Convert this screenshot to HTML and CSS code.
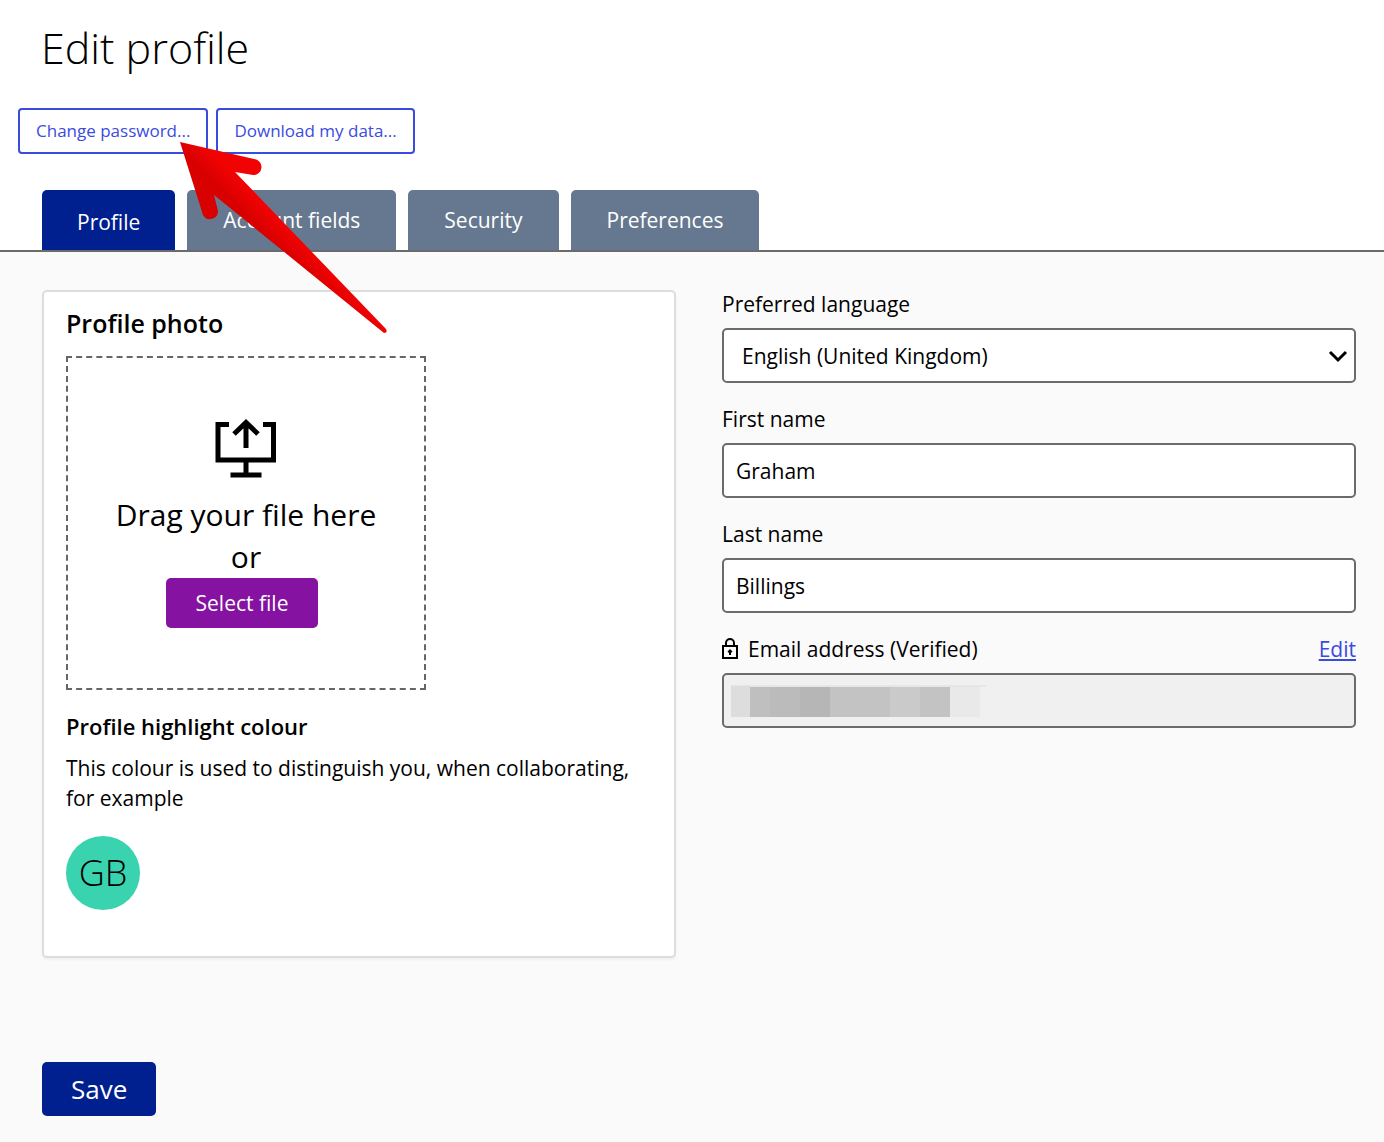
FILE: index.html
```html
<!DOCTYPE html>
<html lang="en">
<head>
    <meta charset="UTF-8">
    <meta name="viewport" content="width=device-width, initial-scale=1.0">
    <title>Edit profile</title>
    <link rel="stylesheet" href="styles.css">
</head>
<body>
    <header class="header">
        <h1>Edit profile</h1>
        <div class="actions">
            <button type="button">Change password...</button>
            <button type="button">Download my data...</button>
        </div>
        <nav class="tabs">
            <a href="#" class="active">Profile</a>
            <a href="#">Account fields</a>
            <a href="#">Security</a>
            <a href="#">Preferences</a>
        </nav>
    </header>

    <form class="main">
        <div class="columns">
            <section class="card">
                <h2>Profile photo</h2>
                <div class="dropzone">
                    <svg class="upload" viewBox="0 0 64 60" width="64" height="60" fill="none" stroke="#000" stroke-width="5">
                        <path d="M15 5.500H4V41H59.500V5.500H49"/>
                        <path d="M32 41V56M16.500 56H47.500"/>
                        <path d="M32 29V4M20 15L32 3.500L44 15"/>
                    </svg>
                    <p>Drag your file here</p>
                    <p>or</p>
                    <button type="button" class="select-file">Select file</button>
                </div>
                <h3>Profile highlight colour</h3>
                <p class="hint">This colour is used to distinguish you, when collaborating, for example</p>
                <div class="avatar">GB</div>
            </section>

            <section class="fields">
                <div class="field">
                    <label for="language">Preferred language</label>
                    <div class="control">
                        <select id="language">
                            <option>English (United Kingdom)</option>
                        </select>
                        <svg class="chevron" viewBox="0 0 20 14" width="20" height="14" fill="none" stroke="#000" stroke-width="3">
                            <path d="M2 2L10 10L18 2"/>
                        </svg>
                    </div>
                </div>
                <div class="field">
                    <label for="first">First name</label>
                    <input id="first" type="text" value="Graham">
                </div>
                <div class="field">
                    <label for="last">Last name</label>
                    <input id="last" type="text" value="Billings">
                </div>
                <div class="field">
                    <div class="label-row">
                        <svg class="lock" viewBox="0 0 18 22" width="18" height="22" fill="none" stroke="#000" stroke-width="2">
                            <path d="M1 8H15V20H1ZM4 8V5A4 4 0 0 1 12 5V8"/>
                            <path d="M8 11L10.500 13.500L9 15V17H7V15L5.500 13.500Z" fill="#000" stroke="none"/>
                        </svg>
                        <label for="email">Email address (Verified)</label>
                        <a href="#">Edit</a>
                    </div>
                    <div class="control">
                        <input id="email" type="email" disabled>
                        <!-- hidden address -->
                        <svg class="mask" viewBox="0 0 255 32" width="255" height="32" shape-rendering="crispEdges">
                            <rect width="255" height="2" fill="#e6e6e6"/>
                            <rect y="1" width="19" height="31" fill="#ddd"/>
                            <rect x="19" y="2" width="20" height="30" fill="#bfbfbf"/>
                            <rect x="39" y="2" width="30" height="30" fill="#bbb"/>
                            <rect x="69" y="2" width="30" height="30" fill="#b6b6b6"/>
                            <rect x="99" y="2" width="60" height="30" fill="#c3c3c3"/>
                            <rect x="159" y="2" width="30" height="30" fill="#cacaca"/>
                            <rect x="189" y="2" width="30" height="30" fill="#c3c3c3"/>
                            <rect x="219" y="2" width="30" height="30" fill="#e9e9e9"/>
                        </svg>
                    </div>
                </div>
            </section>
        </div>
        <button type="submit" class="save">Save</button>
    </form>

    <!-- pointer to the change password button -->
    <svg class="arrow" viewBox="0 0 208 192" width="208" height="192">
        <defs>
            <linearGradient id="red" gradientUnits="userSpaceOnUse" x1="96" y1="102" x2="110" y2="88">
                <stop offset="0" stop-color="#d90000"/>
                <stop offset="1" stop-color="#f20303"/>
            </linearGradient>
        </defs>
        <path d="M0 0L74 17A8 8 0 0 1 73 33L55 30L206 187Q208 191 204 191L34 53L38 69A8 8 0 0 1 23 73Z" fill="url(#red)"/>
    </svg>
</body>
</html>
```
FILE: styles.css
```css
*{
    box-sizing: border-box;
}
body,h1,h2,h3,p{
    margin: 0;
}
body{
    min-height: 100vh;
    display: flex;
    flex-direction: column;
    position: relative;
    background: #fafafa;
    color: #000;
    font-family: "Open Sans", sans-serif;
    font-size: 21px;
    line-height: 28px;
}
button,input,select{
    font: inherit;
    color: inherit;
}
button{
    cursor: pointer;
}

/* header */
.header{
    background: #fff;
    border-bottom: 2px solid #6b6b6b;
    padding-top: 16px;
}
h1{
    margin-left: 41px;
    font-size: 43px;
    font-weight: 300;
    line-height: 64px;
}
.actions{
    display: flex;
    gap: 8px;
    margin: 28px 18px 36px;
}
.actions button{
    height: 46px;
    padding: 0 16px;
    border: 2px solid #3a4be0;
    border-radius: 4px;
    background: #fff;
    color: #3a4be0;
    font-size: 17px;
}
.tabs{
    display: flex;
    gap: 12px;
    padding: 0 42px;
}
.tabs a{
    height: 60px;
    padding: 0 36px;
    border-radius: 5px 5px 0 0;
    background: #66788f;
    color: #fff;
    font-weight: 500;
    line-height: 60px;
    text-decoration: none;
}
.tabs .active{
    padding: 0 35px;
    background: #00208f;
    line-height: 64px;
}

/* content */
.main{
    padding: 38px 28px 26px 42px;
}
.columns{
    display: grid;
    grid-template-columns: 1fr 1fr;
    gap: 46px;
    align-items: start;
}
.card{
    padding: 16px 22px 46px;
    border: 2px solid #ddd;
    border-radius: 5px;
    background: #fff;
    box-shadow: 0 2px 2px #f0f0f0;
}
h2{
    font-size: 25px;
    font-weight: 600;
    line-height: 30px;
}
.dropzone{
    width: 360px;
    max-width: 100%;
    height: 334px;
    margin: 18px 0 22px;
    padding-top: 61px;
    border: 2px dashed #666;
    display: flex;
    flex-direction: column;
    align-items: center;
    font-size: 30px;
    line-height: 42px;
}
.upload{
    margin-bottom: 15px;
}
.select-file{
    height: 50px;
    margin-right: 8px;
    padding: 0 30px;
    border: 0;
    border-radius: 5px;
    background: #8512a0;
    color: #fff;
    font-size: 21px;
    font-weight: 500;
}
h3{
    font-size: 22px;
    font-weight: 600;
    line-height: 28px;
}
.hint{
    margin: 13px 0 23px;
    line-height: 30px;
}
.avatar{
    width: 74px;
    height: 74px;
    border-radius: 50%;
    background: #3ad3af;
    font-size: 36px;
    font-weight: 300;
    line-height: 74px;
    text-align: center;
}
.fields{
    display: flex;
    flex-direction: column;
    gap: 22px;
}
.field label{
    display: block;
}
.field input,.field select{
    display: block;
    width: 100%;
    height: 55px;
    margin-top: 10px;
    padding: 0 12px;
    border: 2px solid #6b6b6b;
    border-radius: 5px;
    background: #fff;
}
.field select{
    padding: 0 18px;
    appearance: none;
}
.field input:disabled{
    background: #f0f0f0;
}
.control{
    position: relative;
}
.chevron{
    position: absolute;
    right: 8px;
    top: 22px;
}
.mask{
    position: absolute;
    left: 9px;
    top: 12px;
}
.label-row{
    display: flex;
    align-items: center;
}
.label-row svg{
    margin-right: 8px;
}
.label-row a{
    margin-left: auto;
    color: #3a4be0;
}
.save{
    height: 54px;
    margin-top: 104px;
    padding: 0 29px;
    border: 0;
    border-radius: 5px;
    background: #00208f;
    color: #fff;
    font-size: 26px;
    font-weight: 500;
}

.arrow{
    position: absolute;
    left: 180px;
    top: 142px;
    pointer-events: none;
}
```
